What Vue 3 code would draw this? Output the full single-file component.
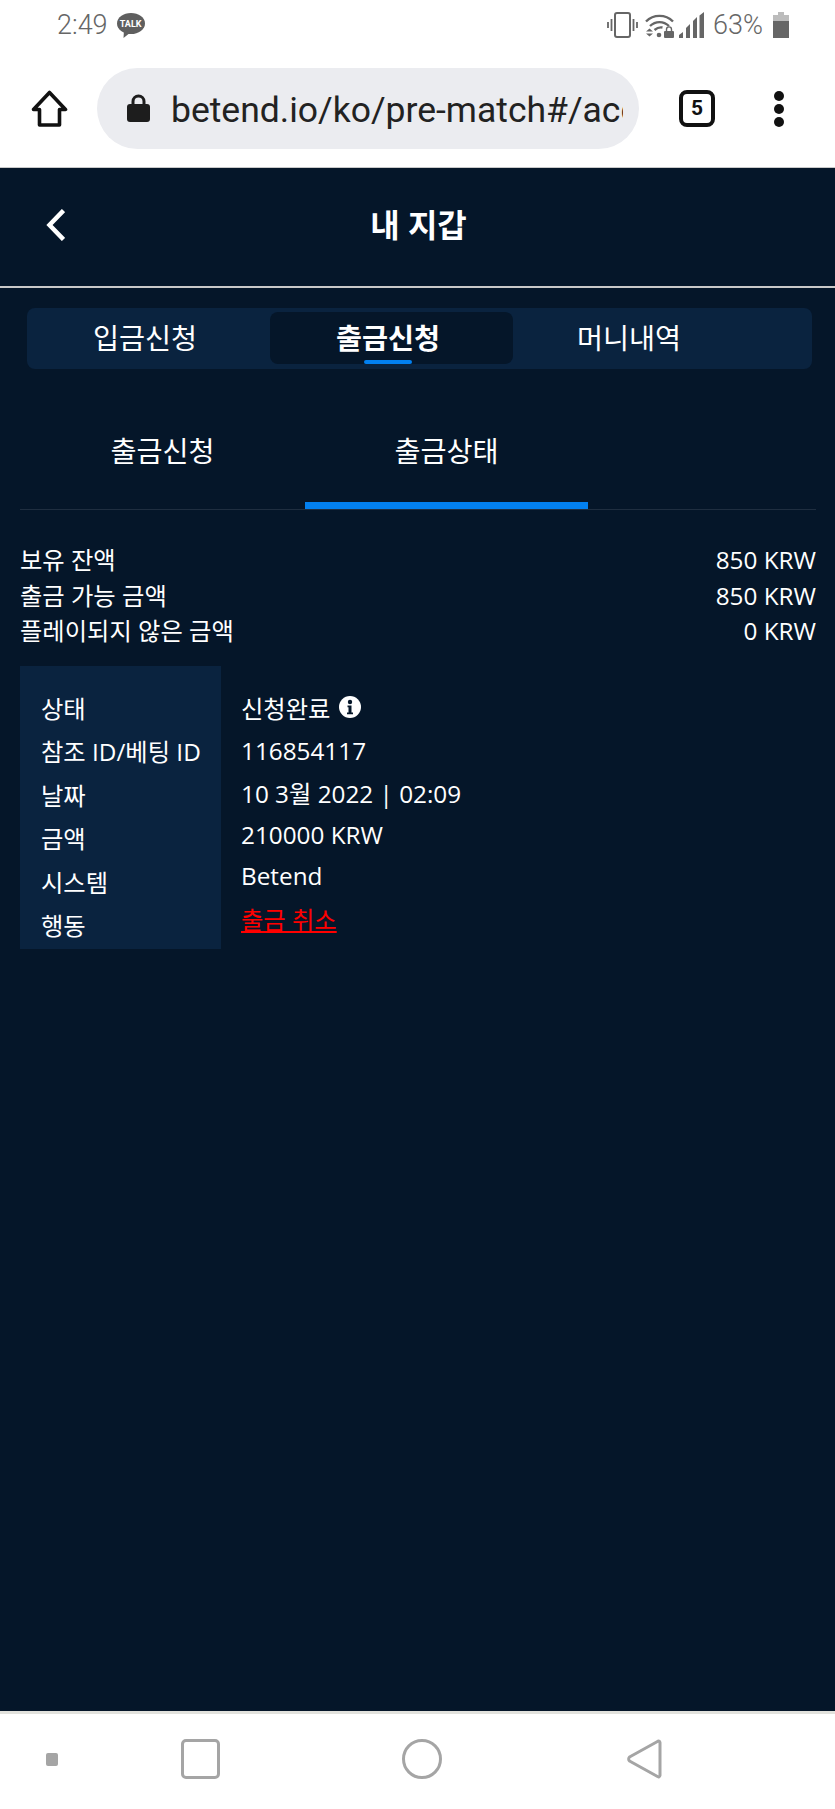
<template>
  <div class="phone">
    <!-- status bar -->
    <div class="status-bar">
      <div class="status-left">
        <span class="time">2:49</span>
        <span class="talk">
          <svg viewBox="0 0 28 25" width="28" height="25" aria-hidden="true">
            <ellipse cx="14" cy="10.500" rx="14" ry="10.500" fill="#5f5f5f" />
            <path d="M7 17 L6.500 25 L14 19 Z" fill="#5f5f5f" />
          </svg>
          <span class="talk-text">TALK</span>
        </span>
      </div>
      <div class="status-right">
        <svg class="vibrate" viewBox="0 0 31 26" width="31" height="26" aria-hidden="true">
          <rect x="8" y="1" width="15" height="24" rx="2" fill="none" stroke="#666" stroke-width="2" />
          <path d="M4.500 7v12M1 10v6M26.500 7v12M30 10v6" stroke="#666" stroke-width="1.800" fill="none" />
        </svg>
        <svg class="wifi" viewBox="0 0 29 26" width="29" height="26" aria-hidden="true">
          <path d="M1 9.500C8.500 2 20.500 2 28 9.500" fill="none" stroke="#666" stroke-width="2.400" />
          <path d="M5 14C10.500 8.800 18.500 8.800 24 14" fill="none" stroke="#666" stroke-width="2.400" />
          <path d="M9.500 18C12.500 15.500 15 15 17.500 15.500" fill="none" stroke="#666" stroke-width="2.400" />
          <circle cx="14" cy="23" r="2.300" fill="#666" />
          <path d="M1 19.500h7l-3.500-3zM1 21.500h7l-3.500 3z" fill="#666" />
          <rect x="19" y="19" width="10" height="7" rx="1" fill="#666" />
          <path d="M21.500 19v-1.600a2.500 2.500 0 0 1 5 0V19" fill="none" stroke="#666" stroke-width="1.400" />
        </svg>
        <svg class="signal" viewBox="0 0 25 26" width="25" height="26" aria-hidden="true">
          <path d="M0 26v-3l4-3v6zM7 26V16l4-4v14zM14 26V9l4-4v21zM20.500 26V3.500L25 0v26z" fill="#666" />
        </svg>
        <span class="percent">63%</span>
        <svg class="battery" viewBox="0 0 16 26" width="16" height="26" aria-hidden="true">
          <path d="M5 0h6v3h5v6H0V3h5z" fill="#bcbcbc" />
          <rect x="0" y="9" width="16" height="17" fill="#666" />
        </svg>
      </div>
    </div>

    <!-- browser toolbar -->
    <div class="toolbar">
      <svg class="home" viewBox="0 0 37 37" width="37" height="37" aria-hidden="true">
        <path d="M18.500 2.500L34.500 19.500H28.500V35H8.500V19.500H2.500Z" fill="none" stroke="#111" stroke-width="3.600" stroke-linejoin="round" />
      </svg>
      <div class="url-pill">
        <svg class="lock" viewBox="0 0 23 28" width="23" height="28" aria-hidden="true">
          <path d="M6 12V7.500a5.500 5.500 0 0 1 11 0V12" fill="none" stroke="#1d1d1d" stroke-width="3" />
          <rect x="0" y="10" width="23" height="18" rx="3" fill="#1d1d1d" />
        </svg>
        <span class="url">betend.io/ko/pre-match#/acc</span>
      </div>
      <div class="tab-count">5</div>
      <div class="menu-dots">
        <span v-for="n in 3" :key="n" class="dot"></span>
      </div>
    </div>

    <!-- page -->
    <div class="page">
      <header class="page-head">
        <svg class="back" viewBox="0 0 19 32" width="19" height="32" aria-hidden="true">
          <path d="M17.500 1.500L3.500 16l14 14.500" fill="none" stroke="#fff" stroke-width="4.500" />
        </svg>
        <h1 class="title">내 지갑</h1>
      </header>

      <div class="main-tabs">
        <div
          v-for="tab in mainTabs"
          :key="tab.label"
          class="main-tab"
          :class="[tab.cls, { active: tab.active }]"
        >
          {{ tab.label }}
          <span v-if="tab.active" class="main-tab-bar"></span>
        </div>
      </div>

      <div class="sub-tabs">
        <div class="sub-tab first">출금신청</div>
        <div class="sub-tab active">출금상태</div>
      </div>

      <div class="balances">
        <div v-for="row in balances" :key="row.label" class="balance-row">
          <span>{{ row.label }}</span>
          <span>{{ row.value }}</span>
        </div>
      </div>

      <div class="detail">
        <div class="detail-labels">
          <div v-for="label in detailLabels" :key="label" class="detail-line">{{ label }}</div>
        </div>
        <div class="detail-values">
          <div class="detail-line status">
            신청완료
            <svg class="info" viewBox="0 0 22 22" width="22" height="22" aria-hidden="true">
              <circle cx="11" cy="11" r="11" fill="#fff" />
              <circle cx="11" cy="6" r="2.200" fill="#051629" />
              <path d="M8.500 9.500h4v7h1.500v1.800H8v-1.800h1.500v-5.200h-1z" fill="#051629" />
            </svg>
          </div>
          <div class="detail-line">116854117</div>
          <div class="detail-line">10 3월 2022 | 02:09</div>
          <div class="detail-line">210000 KRW</div>
          <div class="detail-line">Betend</div>
          <div class="detail-line"><a class="cancel">출금 취소</a></div>
        </div>
      </div>
    </div>

    <!-- android nav -->
    <div class="nav-bar">
      <span class="nav-dot"></span>
      <span class="nav-square"></span>
      <span class="nav-circle"></span>
      <svg class="nav-back" viewBox="0 0 36 40" width="36" height="40" aria-hidden="true">
        <path d="M33 3.500a1.500 1.500 0 0 0-2.500-1L2.500 18a2.800 2.800 0 0 0 0 4l28 15.500a1.500 1.500 0 0 0 2.500-1z" fill="none" stroke="#a5a5a5" stroke-width="3" stroke-linejoin="round" />
      </svg>
    </div>
  </div>
</template>

<script setup>
const mainTabs = [
  { label: "입금신청", cls: "first", active: false },
  { label: "출금신청", cls: "second", active: true },
  { label: "머니내역", cls: "third", active: false },
];

const balances = [
  { label: "보유 잔액", value: "850 KRW" },
  { label: "출금 가능 금액", value: "850 KRW" },
  { label: "플레이되지 않은 금액", value: "0 KRW" },
];

const detailLabels = ["상태", "참조 ID/베팅 ID", "날짜", "금액", "시스템", "행동"];
</script>

<style>
html,
body {
  margin: 0;
  background: #fff;
}
</style>

<style scoped>
.phone {
  width: 835px;
  height: 1809px;
  display: flex;
  flex-direction: column;
  overflow: hidden;
  font-family: "Open Sans", "Noto Sans CJK KR", sans-serif;
  background: #fff;
}

.status-bar {
  height: 50px;
  display: flex;
  justify-content: space-between;
  align-items: flex-start;
  padding: 12px 46px 0 57px;
  box-sizing: border-box;
  color: #666;
  font-family: Roboto, sans-serif;
}

.status-left,
.status-right {
  display: flex;
  align-items: center;
  height: 26px;
}

.time {
  font-size: 27px;
  font-weight: 300;
  margin-right: 9px;
}

.talk {
  display: flex;
  position: relative;
  width: 28px;
  height: 25px;
}

.talk-text {
  position: absolute;
  top: 6px;
  left: 3px;
  width: 22px;
  text-align: center;
  color: #fff;
  font-size: 9px;
  line-height: 10px;
  font-weight: 700;
}

.vibrate {
  margin-right: 7px;
}

.wifi {
  margin-right: 5px;
}

.signal {
  margin-right: 9px;
}

.percent {
  font-size: 27px;
  font-weight: 300;
  margin-right: 10px;
}

.toolbar {
  height: 117px;
  display: flex;
  align-items: center;
  padding: 0 0 1px 31px;
  box-sizing: border-box;
  flex-shrink: 0;
}

.home {
  flex-shrink: 0;
  margin-right: 29px;
}

.url-pill {
  width: 542px;
  height: 81px;
  border-radius: 41px;
  background: #ebecf0;
  display: flex;
  align-items: center;
  padding-left: 30px;
  box-sizing: border-box;
  flex-shrink: 0;
  margin-right: 40px;
}

.lock {
  flex-shrink: 0;
  margin-right: 21px;
}

.url {
  width: 452px;
  overflow: hidden;
  white-space: nowrap;
  padding-top: 3px;
  font-family: Roboto, sans-serif;
  font-size: 35.500px;
  color: #222;
}

.tab-count {
  width: 36px;
  height: 37px;
  border: 4px solid #111;
  border-radius: 8px;
  box-sizing: border-box;
  display: flex;
  align-items: center;
  justify-content: center;
  font-family: Roboto, sans-serif;
  font-size: 21px;
  font-weight: 700;
  color: #111;
  flex-shrink: 0;
  margin-right: 59px;
}

.menu-dots {
  display: flex;
  flex-direction: column;
  gap: 3px;
  padding-top: 2px;
}

.dot {
  width: 10px;
  height: 10px;
  border-radius: 50%;
  background: #111;
}

.page {
  flex: 1;
  background: #051629;
  color: #fff;
  border-top: 1px solid #c9c9c9;
  min-height: 0;
}

.page-head {
  height: 118px;
  border-bottom: 2px solid #c8c8c8;
  display: flex;
  align-items: center;
  justify-content: center;
  position: relative;
}

.back {
  position: absolute;
  left: 46px;
  top: 41px;
}

.title {
  margin: 0 0 0 2px;
  font-size: 32px;
  font-weight: 700;
  position: relative;
  top: -4px;
}

.main-tabs {
  margin: 20px 23px 0 27px;
  height: 61px;
  padding: 4px 0 5px;
  box-sizing: border-box;
  background: #0a233f;
  border-radius: 8px;
  display: flex;
  font-size: 28.300px;
}

.main-tab {
  display: flex;
  align-items: center;
  justify-content: center;
  position: relative;
  border-radius: 8px;
  padding-bottom: 4px;
  box-sizing: border-box;
}

.main-tab.first {
  width: 236px;
  margin-right: 7px;
}

.main-tab.second {
  width: 243px;
  padding-right: 7px;
}

.main-tab.third {
  width: 232px;
}

.main-tab.active {
  background: #051629;
  font-weight: 700;
}

.main-tab-bar {
  position: absolute;
  left: 94px;
  bottom: 0;
  width: 48px;
  height: 4px;
  border-radius: 2px;
  background: #0280f0;
}

.sub-tabs {
  margin: 31px 19px 0 20px;
  display: flex;
  border-bottom: 1px solid #1f2e40;
}

.sub-tab {
  width: 283px;
  height: 109px;
  border-bottom: 7px solid transparent;
  padding-bottom: 3px;
  box-sizing: border-box;
  display: flex;
  align-items: center;
  justify-content: center;
  font-size: 28.300px;
}

.sub-tab.first {
  width: 285px;
}

.sub-tab.active {
  border-bottom-color: #0280f0;
}

.balances {
  margin: 32px 19px 0 20px;
  font-size: 24.300px;
}

.balance-row {
  display: flex;
  justify-content: space-between;
  height: 35.500px;
  line-height: 35.500px;
}

.detail {
  margin: 17px 0 0 20px;
  display: flex;
  height: 283px;
  font-size: 24.300px;
}

.detail-labels {
  width: 201px;
  background: #0a233f;
  padding: 24px 0 0 21px;
  box-sizing: border-box;
}

.detail-labels .detail-line {
  margin-bottom: 8.500px;
}

.detail-values {
  padding: 24px 0 0 20px;
}

.detail-line {
  margin-bottom: 8.300px;
}

.status {
  display: flex;
  align-items: center;
  gap: 9px;
  margin-bottom: 9px;
}

.cancel {
  color: #f00;
  text-decoration: underline;
}

.nav-bar {
  height: 98px;
  flex-shrink: 0;
  border-top: 3px solid #e2e2dd;
  box-sizing: border-box;
  display: flex;
  align-items: center;
  padding: 0 0 5px 46px;
  background: #fff;
}

.nav-dot {
  width: 12px;
  height: 13px;
  border-radius: 2px;
  background: #a5a5a5;
  margin-right: 123px;
}

.nav-square {
  width: 39px;
  height: 40px;
  border: 3px solid #a5a5a5;
  border-radius: 5px;
  box-sizing: border-box;
  margin-right: 182px;
}

.nav-circle {
  width: 40px;
  height: 40px;
  border: 3px solid #a5a5a5;
  border-radius: 50%;
  box-sizing: border-box;
  margin-right: 185px;
}
</style>
